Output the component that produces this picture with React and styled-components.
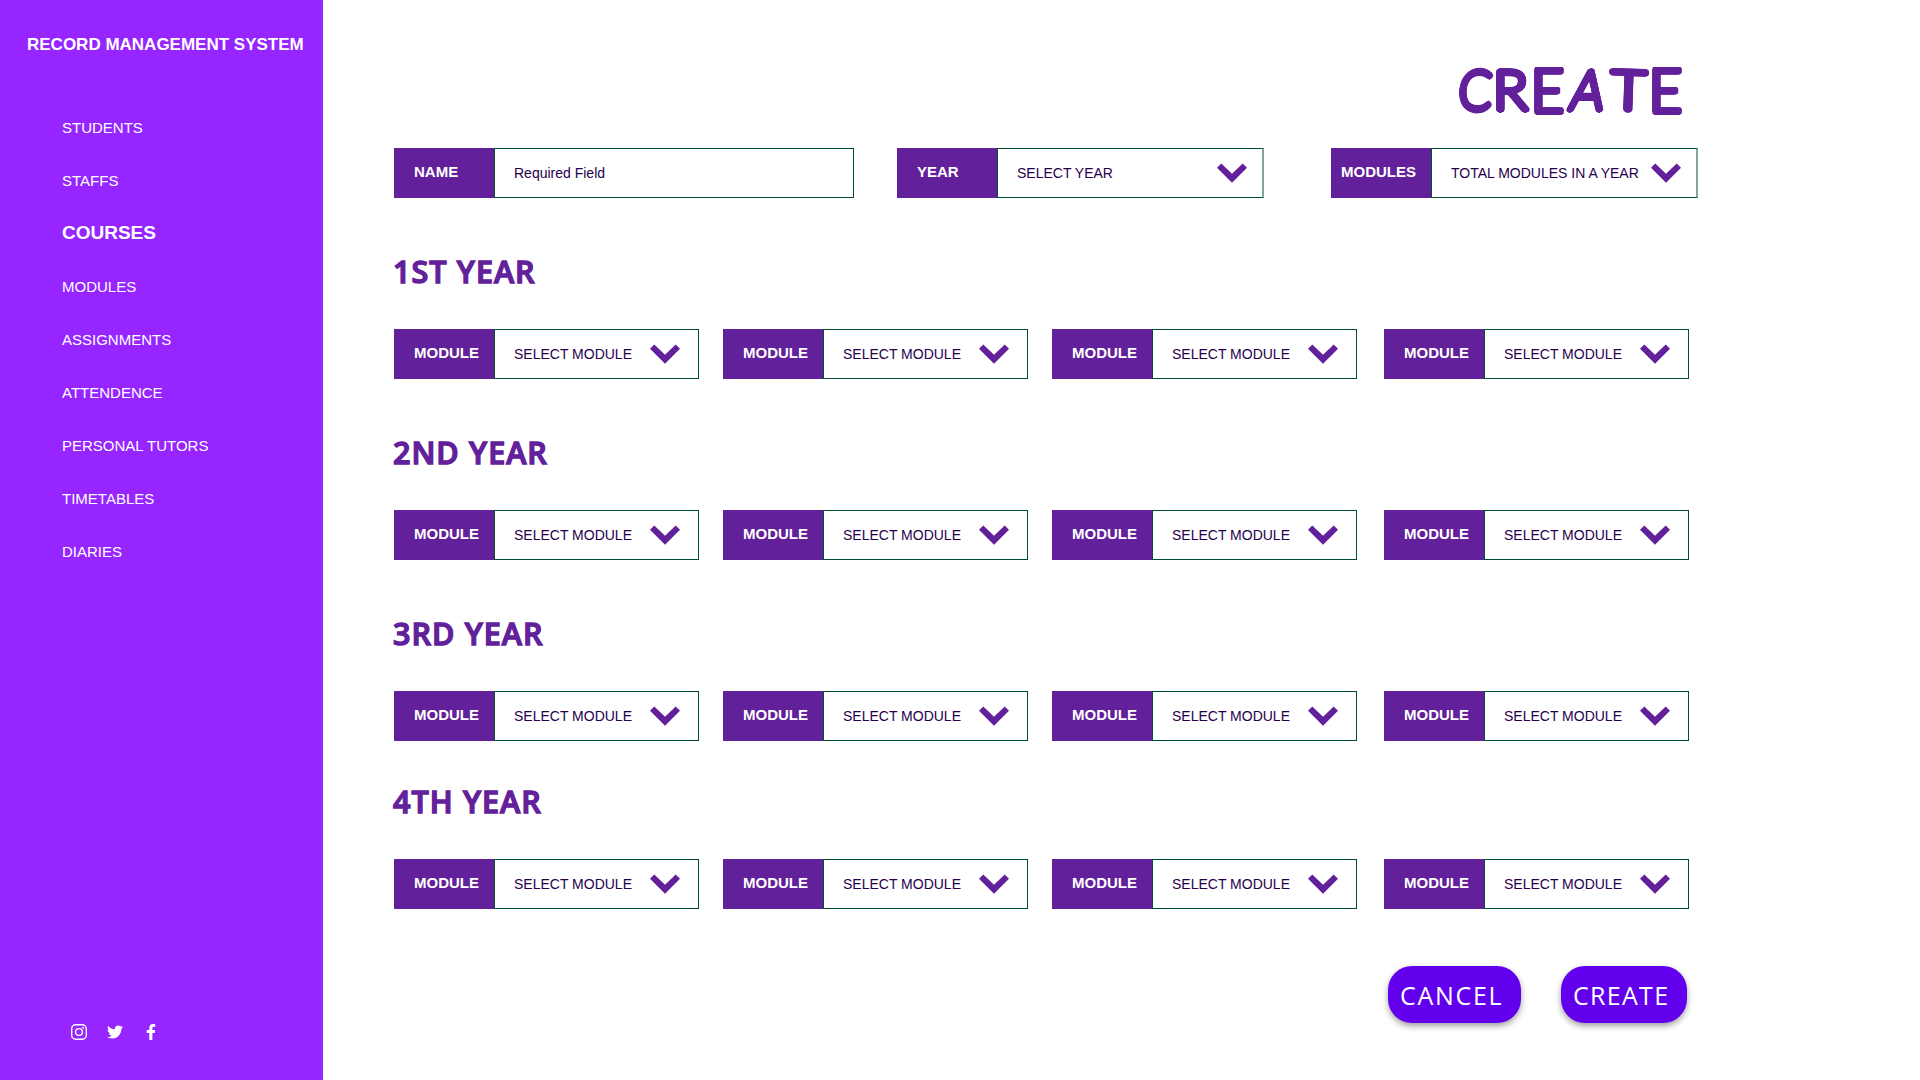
import React from "react";
import styled, { createGlobalStyle } from "styled-components";
import { FaTwitter, FaFacebookF } from "react-icons/fa";

const GlobalStyle = createGlobalStyle`
  * { box-sizing: border-box; }
  html, body { margin: 0; padding: 0; background: #fff; }
  body { font-family: "Liberation Sans", Arial, sans-serif; overflow: hidden; }
`;

const Page = styled.div`
  display: flex;
  width: 1920px;
  height: 1080px;
  overflow: hidden;
`;

const Sidebar = styled.aside`
  display: flex;
  flex-direction: column;
  width: 323px;
  height: 100%;
  padding: 35px 0 40px;
  background: #9625ff;
  color: #fff;
`;

const Brand = styled.div`
  padding-left: 27px;
  font-size: 17px;
  font-weight: 700;
  line-height: 20px;
  white-space: nowrap;
`;

const Nav = styled.nav`
  display: flex;
  flex-direction: column;
  margin-top: 46px;
  padding-left: 62px;
`;

const NavItem = styled.a`
  height: 53px;
  color: #fff;
  white-space: nowrap;
  font-size: ${(p) => (p.$active ? 19 : 15)}px;
  font-weight: ${(p) => (p.$active ? 700 : 400)};
  line-height: ${(p) => (p.$active ? 51 : 53)}px;
`;

const Social = styled.div`
  display: flex;
  align-items: center;
  height: 16px;
  margin-top: auto;
  padding-left: 71px;
  svg { display: block; flex: none; }
`;

const SocialLink = styled.a`
  display: flex;
  align-items: center;
  justify-content: center;
  width: 16px;
  height: 16px;
  margin-right: 20px;
  color: #fff;
`;

const Main = styled.main`
  display: flex;
  flex-direction: column;
  width: 1597px;
  padding: 56px 0 0 71px;
`;

const Title = styled.h1`
  height: 68px;
  margin: 0 0 24px 1063px;
  font-family: Lato, sans-serif;
  font-size: 55px;
  font-weight: 300;
  line-height: 67px;
  color: #62209a;
  white-space: nowrap;
  text-shadow: 2.6px 0, -2.6px 0, 0 2.6px, 0 -2.6px, 1.8px 1.8px,
    -1.8px 1.8px, 1.8px -1.8px, -1.8px -1.8px, 2.4px 1px, -2.4px 1px,
    2.4px -1px, -2.4px -1px, 1px 2.4px, -1px 2.4px, 1px -2.4px, -1px -2.4px,
    1.3px 0, -1.3px 0, 0 1.3px, 0 -1.3px;
`;

const Letter = styled.span`
  display: inline-block;
  width: ${(p) => p.$w}px;
  text-align: center;
  transform: ${(p) => p.$t};
`;

const Filters = styled.div`
  display: grid;
  grid-template-columns: 503px 434px 367px;
  margin-bottom: 51px;
`;

const Field = styled.div`
  display: flex;
  width: ${(p) => p.$w}px;
  height: 50px;
`;

const Label = styled.div`
  width: 100px;
  padding-left: ${(p) => (p.$tight ? 10 : 20)}px;
  background: #62209a;
  color: #fff;
  font-size: 15px;
  font-weight: 700;
  line-height: 48px;
`;

const Control = styled.div`
  display: flex;
  align-items: center;
  justify-content: space-between;
  flex: 1;
  padding: 0 ${(p) => (p.$soft ? 15 : 18)}px 0 19px;
  border: 1px solid #00502f;
  ${(p) => p.$soft && "border-right: 2px solid #80a797;"}
  color: #27004d;
  font-size: 14px;
  line-height: 48px;
  white-space: nowrap;
  svg { display: block; flex: none; }
`;

const YearSection = styled.section`
  margin-bottom: ${(p) => p.$gap}px;
`;

const YearHeading = styled.h2`
  height: 44px;
  margin: 0 0 36px -1px;
  font-family: "Open Sans", "Noto Sans", sans-serif;
  font-size: 30.5px;
  font-weight: 600;
  line-height: 44px;
  letter-spacing: 1px;
  word-spacing: 0.5px;
  color: #62209a;
  -webkit-text-stroke: 1.4px #62209a;
`;

const ModuleRow = styled.div`
  display: grid;
  grid-template-columns: 329px 329px 332px 305px;
`;

const Actions = styled.div`
  display: flex;
  gap: 40px;
  margin-left: 994px;
`;

const Button = styled.button`
  width: ${(p) => p.$w}px;
  height: 57px;
  padding: 2px 0 0 12px;
  border: 0;
  border-radius: 24px;
  background: #6200ee;
  box-shadow: 0 3px 6px rgba(0, 0, 0, 0.38);
  color: #fff;
  font-family: "Open Sans", "Noto Sans", sans-serif;
  font-size: 25px;
  font-weight: 400;
  line-height: 55px;
  letter-spacing: ${(p) => p.$track}px;
  text-align: left;
  white-space: nowrap;
`;

const Chevron = () => (
  <svg width="30" height="20" viewBox="0 0 30 20">
    <path d="M4.3 0.5 L15 10.8 L25.7 0.5 L30 4.8 L15 19.7 L0 4.8 Z" fill="#62209a" />
  </svg>
);

const Instagram = () => (
  <svg width="16" height="16" viewBox="0 0 16 16" fill="none" stroke="#fff" strokeWidth="1.4">
    <rect x="0.7" y="0.7" width="14.6" height="14.6" rx="4" />
    <circle cx="8" cy="8" r="3.4" />
    <circle cx="12.2" cy="3.8" r="0.95" fill="#fff" stroke="none" />
  </svg>
);

const navItems = [
  "STUDENTS", "STAFFS", "COURSES", "MODULES", "ASSIGNMENTS",
  "ATTENDENCE", "PERSONAL TUTORS", "TIMETABLES", "DIARIES",
];

const titleLetters = [
  ["C", 36, "skewX(-4deg) scaleX(0.9)"],
  ["R", 37, "translateX(-1px) scaleX(1.06)"],
  ["E", 36, "translateX(-0.5px) scale(1.04, 1.12)"],
  ["A", 40, "translateX(2px) skewX(-9deg) scaleX(0.93)"],
  ["T", 44, "translateX(0.5px) rotate(2deg) scaleX(1.13)"],
  ["E", 32, "translateX(-0.5px) scale(1.04, 1.12)"],
];

const years = [
  { name: "1ST YEAR", gap: 51 },
  { name: "2ND YEAR", gap: 51 },
  { name: "3RD YEAR", gap: 38 },
  { name: "4TH YEAR", gap: 57 },
];

export default function App() {
  return (
    <>
      <GlobalStyle />
      <Page>
        <Sidebar>
          <Brand>RECORD MANAGEMENT SYSTEM</Brand>
          <Nav>
            {navItems.map((item) => (
              <NavItem key={item} $active={item === "COURSES"}>{item}</NavItem>
            ))}
          </Nav>
          <Social>
            <SocialLink><Instagram /></SocialLink>
            <SocialLink><FaTwitter size={16} /></SocialLink>
            <SocialLink><FaFacebookF size={16} /></SocialLink>
          </Social>
        </Sidebar>
        <Main>
          <Title>
            {titleLetters.map(([char, w, t], i) => (
              <Letter key={i} $w={w} $t={t}>{char}</Letter>
            ))}
          </Title>
          <Filters>
            <Field $w={460}>
              <Label>NAME</Label>
              <Control>Required Field</Control>
            </Field>
            <Field $w={367}>
              <Label>YEAR</Label>
              <Control $soft>SELECT YEAR<Chevron /></Control>
            </Field>
            <Field $w={367}>
              <Label $tight>MODULES</Label>
              <Control $soft>TOTAL MODULES IN A YEAR<Chevron /></Control>
            </Field>
          </Filters>
          {years.map((year) => (
            <YearSection key={year.name} $gap={year.gap}>
              <YearHeading>{year.name}</YearHeading>
              <ModuleRow>
                {[0, 1, 2, 3].map((n) => (
                  <Field key={n} $w={305}>
                    <Label>MODULE</Label>
                    <Control>SELECT MODULE<Chevron /></Control>
                  </Field>
                ))}
              </ModuleRow>
            </YearSection>
          ))}
          <Actions>
            <Button $w={133} $track={1.7}>CANCEL</Button>
            <Button $w={126} $track={1.3}>CREATE</Button>
          </Actions>
        </Main>
      </Page>
    </>
  );
}
